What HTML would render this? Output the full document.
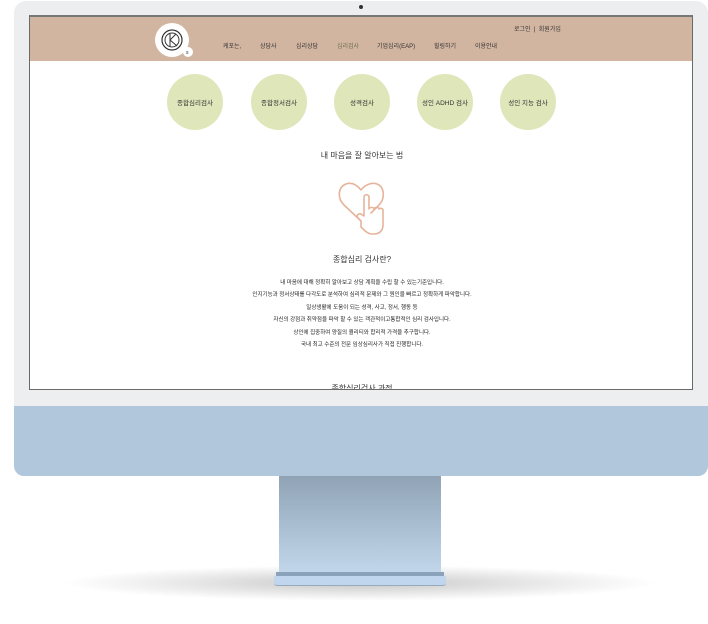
<!DOCTYPE html>
<html><head><meta charset="utf-8"><style>
*{margin:0;padding:0;box-sizing:border-box}
body{width:708px;height:624px;background:#fff;position:relative;overflow:hidden;font-family:"Liberation Sans","Noto Sans CJK KR",sans-serif;color:#333}
.abs{position:absolute}
.body{left:14px;top:1px;width:694px;height:475px;background:#eceef0;border-radius:12px;overflow:hidden}
.chin{left:14px;top:406px;width:694px;height:70px;background:#b0c7dc;border-radius:0 0 10px 10px}
.screen{left:29px;top:15px;width:664px;height:375px;background:#fff;border:1px solid #6a6a6a;border-top:2px solid #777;overflow:hidden}
.hdr{left:0;top:0;width:664px;height:44px;background:#d2b5a0}
.nav{top:24px;font-size:6px;color:#333}
.c{width:56px;height:56px;border-radius:50%;background:#dfe6ba;top:57px;display:flex;align-items:center;justify-content:center;font-size:6.5px;color:#333}
.t{width:664px;left:0;text-align:center}
.p{font-size:5.5px;line-height:12.4px;color:#222}
</style></head><body>
<div class="abs" style="left:60px;top:565px;width:600px;height:36px;border-radius:50%;background:radial-gradient(ellipse at center,rgba(0,0,0,.22),rgba(0,0,0,0) 70%)"></div>
<div class="abs body"></div>
<div class="abs" style="left:359px;top:5px;width:4px;height:4px;border-radius:50%;background:#333"></div>
<div class="abs chin"></div>
<div class="abs" style="left:279px;top:476px;width:162px;height:98px;background:linear-gradient(#8fa3b5,#b4c8dc 70%,#c3d7ec)"></div>
<div class="abs" style="left:276px;top:572px;width:168px;height:4px;background:#8aa3bb"></div>
<div class="abs" style="left:274px;top:576px;width:172px;height:10px;background:#c0d6ee;border-radius:0 0 3px 3px;border-bottom:1px solid #9ab"></div>
<div class="abs screen">
 <div class="abs hdr"></div>
 <div class="abs" style="left:125px;top:6px;width:34px;height:34px;border-radius:50%;background:#fff"></div>
 <svg class="abs" style="left:125px;top:6px" width="44" height="36"><circle cx="17" cy="17" r="10" fill="none" stroke="#333" stroke-width="1.2"/><circle cx="17" cy="17" r="7" fill="none" stroke="#333" stroke-width="1"/><path d="M15 10v14M15 17l6-6M15 17l7 6" stroke="#333" fill="none" stroke-width="1"/><circle cx="33" cy="29" r="5" fill="#fff"/><text x="31" y="31" font-size="5" fill="#333">s</text></svg>
 <div class="abs" style="left:484px;top:7px;font-size:6px;color:#333">로그인 &nbsp;|&nbsp; 회원가입</div>
 <div class="abs nav" style="left:193px">케포는,</div>
 <div class="abs nav" style="left:230px">상담사</div>
 <div class="abs nav" style="left:266px">심리상담</div>
 <div class="abs nav" style="left:307px;color:#6a7050">심리검사</div>
 <div class="abs nav" style="left:347px">기업심리(EAP)</div>
 <div class="abs nav" style="left:404px">힐링하기</div>
 <div class="abs nav" style="left:445px">이용안내</div>
 <div class="abs c" style="left:137px">종합심리검사</div>
 <div class="abs c" style="left:221px">종합정서검사</div>
 <div class="abs c" style="left:304px">성격검사</div>
 <div class="abs c" style="left:387px">성인 ADHD 검사</div>
 <div class="abs c" style="left:470px">성인 지능 검사</div>
 <div class="abs t" style="top:133px;font-size:8px;color:#333">내 마음을 잘 알아보는 법</div>
 <svg class="abs" style="left:305px;top:160px" width="52" height="60" fill="none" stroke="#e6b49a" stroke-width="1.6" stroke-linejoin="round" stroke-linecap="round">
  <path d="M26 44 L9 28 C2 21 3 10 11 7 C17 5 22 8 26 13 C30 8 36 5 42 7 C50 10 50 22 44 28 L36 36"/>
  <path d="M26 44 l-3 -3 c-2 -2 0 -5 3 -4 l3 2 V20 c0 -3 5 -3 5 0 V32 c0 -2 5 -2 5 0 c0 -2 5 -2 5 0 c0 -1 4 -1 4 1 V48 c0 6 -4 9 -9 9 H37 c-4 0 -7 -3 -11 -7 Z"/>
 </svg>
 <div class="abs t" style="top:237px;font-size:8px;color:#333">종합심리 검사란?</div>
 <div class="abs t p" style="top:260px">내 마음에 대해 정확히 알아보고 상담 계획을 수립 할 수 있는기준입니다.<br>인지기능과 정서상태를 다각도로 분석하여 심리적 문제와 그 원인을 빠르고 정확하게 파악합니다.<br>일상생활에 도움이 되는 성격, 사고, 정서, 행동 등<br>자신의 강점과 취약점을 파악 할 수 있는 객관적이고통합적인 심리 검사입니다.<br>상인에 집중하여 양질의 퀄리티와 합리적 가격을 추구합니다.<br>국내 최고 수준의 전문 임상심리사가 직접 진행합니다.</div>
 <div class="abs t" style="top:366px;font-size:8px;color:#333">종합심리검사 과정</div>
</div>
</body></html>
